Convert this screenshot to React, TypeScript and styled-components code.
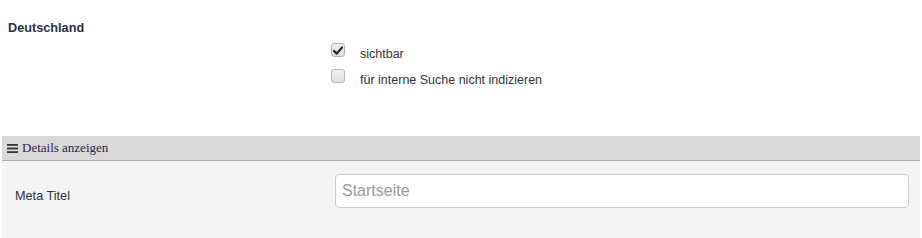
import styled, { createGlobalStyle } from "styled-components";

const GlobalStyle = createGlobalStyle`
  body {
    margin: 0;
    background: #fff;
    font-family: "Liberation Sans", Arial, sans-serif;
    color: #333;
  }
`;

type Option = {
  label: string;
  checked: boolean;
};

const options: Option[] = [
  { label: "sichtbar", checked: true },
  { label: "für interne Suche nicht indizieren", checked: false },
];

export default function App() {
  return (
    <Page>
      <GlobalStyle />
      <Country>
        <CountryName>Deutschland</CountryName>
        <OptionList>
          {options.map((opt) => (
            <OptionRow key={opt.label}>
              <Box>
                {opt.checked && (
                  <svg width="10" height="9" viewBox="0 0 10 9">
                    <path
                      d="M1 5 L3.8 7.6 L9 1.4"
                      fill="none"
                      stroke="#222"
                      strokeWidth="2.2"
                      strokeLinecap="round"
                      strokeLinejoin="round"
                    />
                  </svg>
                )}
              </Box>
              <OptionLabel>{opt.label}</OptionLabel>
            </OptionRow>
          ))}
        </OptionList>
      </Country>

      <Details>
        <DetailsHeader>
          <svg width="11" height="9" viewBox="0 0 11 9">
            <rect x="0" y="0" width="11" height="1.8" fill="#333" />
            <rect x="0" y="3.6" width="11" height="1.8" fill="#333" />
            <rect x="0" y="7.2" width="11" height="1.8" fill="#333" />
          </svg>
          <HeaderTitle>Details anzeigen</HeaderTitle>
        </DetailsHeader>
        <DetailsBody>
          <FieldRow>
            <FieldLabel>Meta Titel</FieldLabel>
            <TextInput placeholder="Startseite" />
          </FieldRow>
        </DetailsBody>
      </Details>
    </Page>
  );
}

const Page = styled.div`
  width: 922px;
  height: 238px;
  overflow: hidden;
`;

const Country = styled.div`
  padding: 21px 0 0 8px;
  height: 115px;
  box-sizing: border-box;
`;

const CountryName = styled.div`
  font-size: 12.7px;
  font-weight: bold;
  color: #2d2f3f;
  line-height: 15px;
`;

const OptionList = styled.div`
  display: flex;
  flex-direction: column;
  gap: 12px;
  margin: 7px 0 0 323px;
`;

const OptionRow = styled.label`
  display: flex;
  align-items: center;
  gap: 15px;
  height: 14px;
`;

const Box = styled.span`
  width: 12px;
  height: 12px;
  border: 1px solid #b5b5b5;
  border-radius: 3px;
  background: linear-gradient(#f2f2f2, #dcdcdc);
  display: flex;
  align-items: center;
  justify-content: center;
`;

const OptionLabel = styled.span`
  font-size: 12.5px;
  color: #333;
  margin-top: 8px;
`;

const Details = styled.section`
  margin: 21px 2px 0;
`;

const DetailsHeader = styled.div`
  display: flex;
  align-items: center;
  gap: 4px;
  height: 24px;
  padding: 0 0 0 5px;
  background: #d9d9d9;
  border-bottom: 1px solid #a8a8a8;
`;

const HeaderTitle = styled.span`
  font-family: "Liberation Serif", "Times New Roman", serif;
  font-size: 13px;
  color: #2b2250;
`;

const DetailsBody = styled.div`
  background: #f4f4f4;
  padding: 13px 11px 30px 13px;
`;

const FieldRow = styled.div`
  display: grid;
  grid-template-columns: 320px 1fr;
  align-items: center;
`;

const FieldLabel = styled.span`
  font-size: 12.7px;
  color: #333;
  padding-top: 9px;
`;

const TextInput = styled.input`
  height: 34px;
  box-sizing: border-box;
  border: 1px solid #ccc;
  border-radius: 4px;
  background: #fff;
  padding: 0 6px;
  font-family: "Liberation Sans", Arial, sans-serif;
  font-size: 16px;
  color: #555;
  &::placeholder {
    color: #999;
  }
`;
